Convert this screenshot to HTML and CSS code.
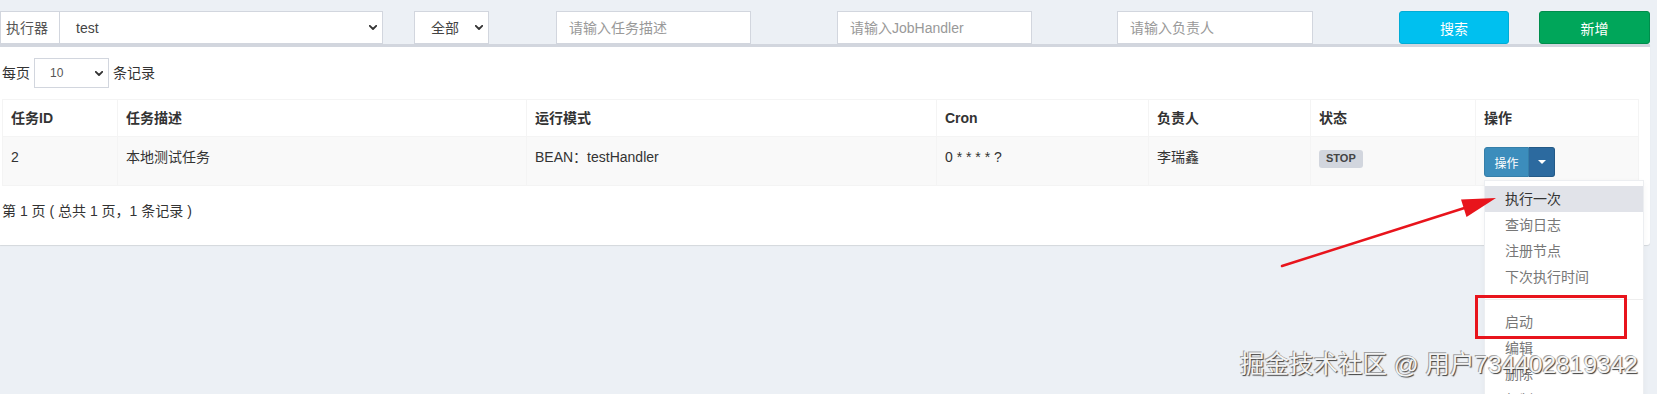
FILE: index.html
```html
<!DOCTYPE html>
<html lang="zh-CN">
<head>
<meta charset="utf-8">
<title>任务管理</title>
<link rel="stylesheet" href="styles.css">
</head>
<body>
<div class="filters">
  <div class="igroup">
    <span class="addon">执行器</span>
    <div class="sel sel-exec"><span>test</span><svg class="chev" width="8" height="5" viewBox="0 0 8 5"><polyline points="0.8,0.8 4,4 7.2,0.8" /></svg></div>
  </div>
  <div class="sel sel-status"><span>全部</span><svg class="chev" width="8" height="5" viewBox="0 0 8 5"><polyline points="0.8,0.8 4,4 7.2,0.8" /></svg></div>
  <input class="inp inp-desc" placeholder="请输入任务描述">
  <input class="inp inp-job" placeholder="请输入JobHandler">
  <input class="inp inp-owner" placeholder="请输入负责人">
  <button class="btn btn-search">搜索</button>
  <button class="btn btn-add">新增</button>
</div>

<div class="box">
  <div class="length">
    <span>每页</span>
    <div class="sel sel-len"><span>10</span><svg class="chev" width="8" height="5" viewBox="0 0 8 5"><polyline points="0.8,0.8 4,4 7.2,0.8" /></svg></div>
    <span>条记录</span>
  </div>
  <table class="grid">
    <thead>
      <tr>
        <th class="c1">任务ID</th>
        <th class="c2">任务描述</th>
        <th class="c3">运行模式</th>
        <th class="c4">Cron</th>
        <th class="c5">负责人</th>
        <th class="c6">状态</th>
        <th class="c7">操作</th>
      </tr>
    </thead>
    <tbody>
      <tr>
        <td>2</td>
        <td>本地测试任务</td>
        <td>BEAN：testHandler</td>
        <td>0 * * * * ?</td>
        <td>李瑞鑫</td>
        <td><span class="label">STOP</span></td>
        <td>
          <div class="btn-group">
            <button class="btn-op">操作</button><button class="btn-caret"><span class="caret"></span></button>
            <ul class="menu">
              <li class="item active">执行一次</li>
              <li class="item">查询日志</li>
              <li class="item">注册节点</li>
              <li class="item">下次执行时间</li>
              <li class="divider"></li>
              <li class="item">启动</li>
              <li class="item">编辑</li>
              <li class="item">删除</li>
              <li class="item">复制</li>
            </ul>
          </div>
        </td>
      </tr>
    </tbody>
  </table>
  <div class="info">第 1 页 ( 总共 1 页，1 条记录 )</div>
</div>

<svg class="annot" width="1657" height="394" viewBox="0 0 1657 394">
  <line x1="1282" y1="266" x2="1466" y2="207.5" stroke="#e8141c" stroke-width="2.5" stroke-linecap="round"/>
  <polygon points="1496,198 1461,199.5 1466.5,217" fill="#e8141c"/>
  <rect x="1476.5" y="296.5" width="149" height="41" fill="none" stroke="#e8141c" stroke-width="3"/>
</svg>

<div class="watermark">掘金技术社区 @ 用户734402819342</div>
</body>
</html>
```

FILE: styles.css
```css
html, body {
  margin: 0;
  padding: 0;
  height: 100%;
  overflow: hidden;
  background: #ecf0f5;
}

body {
  font-family: "Liberation Sans", "Noto Sans CJK SC", sans-serif;
  font-size: 14px;
  line-height: 20px;
  color: #333;
  position: relative;
}

/* ---------- filter bar ---------- */
.filters {
  display: flex;
  padding-top: 11px;
  height: 33px;
}

.igroup {
  display: flex;
  width: 383px;
  height: 33px;
}

.addon {
  box-sizing: border-box;
  width: 59px;
  height: 33px;
  display: flex;
  align-items: center;
  padding-left: 5px;
  background: #fff;
  border: 1px solid #d2d6de;
  border-right: none;
  color: #555;
}

.sel {
  box-sizing: border-box;
  height: 33px;
  display: flex;
  align-items: center;
  justify-content: space-between;
  padding: 0 5px 0 16px;
  background: #fff;
  border: 1px solid #d2d6de;
  color: #444;
}

.chev polyline {
  fill: none;
  stroke: #333;
  stroke-width: 1.8;
  stroke-linecap: round;
  stroke-linejoin: round;
}

.sel-exec { width: 324px; }
.sel-status { width: 75px; margin-left: 31px; }

.inp {
  box-sizing: border-box;
  height: 33px;
  padding: 6px 12px;
  border: 1px solid #d2d6de;
  background: #fff;
  font-family: inherit;
  font-size: 14px;
  color: #555;
  outline: none;
}
.inp::placeholder { color: #999; }

.inp-desc { width: 195px; margin-left: 67px; }
.inp-job { width: 195px; margin-left: 86px; }
.inp-owner { width: 196px; margin-left: 85px; }

.btn {
  box-sizing: border-box;
  height: 33px;
  border-radius: 3px;
  border: 1px solid transparent;
  color: #fff;
  font-family: inherit;
  font-size: 14px;
  padding: 0;
}
.btn-search {
  width: 110px;
  margin-left: 86px;
  background: #00c0ef;
  border-color: #00acd6;
}
.btn-add {
  width: 111px;
  margin-left: 30px;
  background: #00a65a;
  border-color: #008d4c;
}

/* ---------- box ---------- */
.box {
  box-sizing: border-box;
  width: 1650px;
  background: #fff;
  border-top: 3px solid #d2d6de;
  padding: 11px 11px 24px 2px;
  box-shadow: 0 1px 1px rgba(0, 0, 0, 0.1);
  border-radius: 0 0 3px 0;
}

.length {
  display: flex;
  align-items: center;
  height: 30px;
}
.sel-len {
  width: 75px;
  height: 30px;
  margin: 0 4px;
  padding: 0 5px 0 15px;
  font-size: 12px;
  color: #555;
}

.grid {
  width: 1637px;
  margin-top: 11px;
  border-collapse: collapse;
  table-layout: fixed;
  border: 1px solid #f4f4f4;
}
.grid th,
.grid td {
  border: 1px solid #f4f4f4;
  text-align: left;
  vertical-align: top;
  white-space: nowrap;
}
.grid th {
  padding: 8px;
  font-weight: bold;
  background: #fff;
}
.grid td {
  padding: 10px 8px 8px;
  background: #f9f9f9;
}

.c1 { width: 98px; }
.c2 { width: 392px; }
.c3 { width: 393px; }
.c4 { width: 195px; }
.c5 { width: 145px; }
.c6 { width: 148px; }

.label {
  display: inline-block;
  margin-top: 2px;
  padding: 3px 7px 4px;
  font-size: 11px;
  line-height: 11px;
  font-weight: bold;
  color: #444;
  background: #d2d6de;
  border-radius: 3px;
}

.btn-group {
  position: relative;
  display: inline-flex;
  vertical-align: top;
  height: 30px;
}
.btn-op {
  box-sizing: border-box;
  width: 45px;
  height: 30px;
  padding: 0;
  background: #3c8dbc;
  border: 1px solid #367fa9;
  border-radius: 3px 0 0 3px;
  color: #fff;
  font-family: inherit;
  font-size: 12px;
}
.btn-caret {
  box-sizing: border-box;
  width: 26px;
  height: 30px;
  padding: 0;
  background: #2c6a9f;
  border: 1px solid #245a87;
  border-left: none;
  border-radius: 0 3px 3px 0;
  display: flex;
  align-items: center;
  justify-content: center;
}
.caret {
  width: 0;
  height: 0;
  border-top: 4px solid #fff;
  border-left: 4px solid transparent;
  border-right: 4px solid transparent;
}

.menu {
  position: absolute;
  top: 100%;
  left: 0;
  z-index: 10;
  box-sizing: border-box;
  width: 160px;
  margin: 3px 0 0;
  padding: 5px 0;
  list-style: none;
  background: #fff;
  border: 1px solid #eceef1;
  box-shadow: 0 2px 6px rgba(0, 0, 0, 0.04);
}
.item {
  padding: 3px 20px;
  line-height: 20px;
  font-size: 14px;
  color: #777;
  white-space: nowrap;
}
.item.active {
  background: #e1e3e9;
  color: #333;
}
.divider {
  height: 1px;
  margin: 9px 0;
  background: #eee;
}

.info {
  margin-top: 15px;
  line-height: 20px;
}

/* ---------- overlays ---------- */
.annot {
  position: absolute;
  left: 0;
  top: 0;
  z-index: 20;
  pointer-events: none;
}

.watermark {
  position: absolute;
  left: 1240px;
  top: 350px;
  z-index: 30;
  font-size: 24.5px;
  line-height: 30px;
  white-space: nowrap;
  color: #f4f4f4;
  text-shadow: -1px -1px 0 rgba(90, 90, 90, 0.55), 1px 1px 1px #3d3d3d;
}
```
